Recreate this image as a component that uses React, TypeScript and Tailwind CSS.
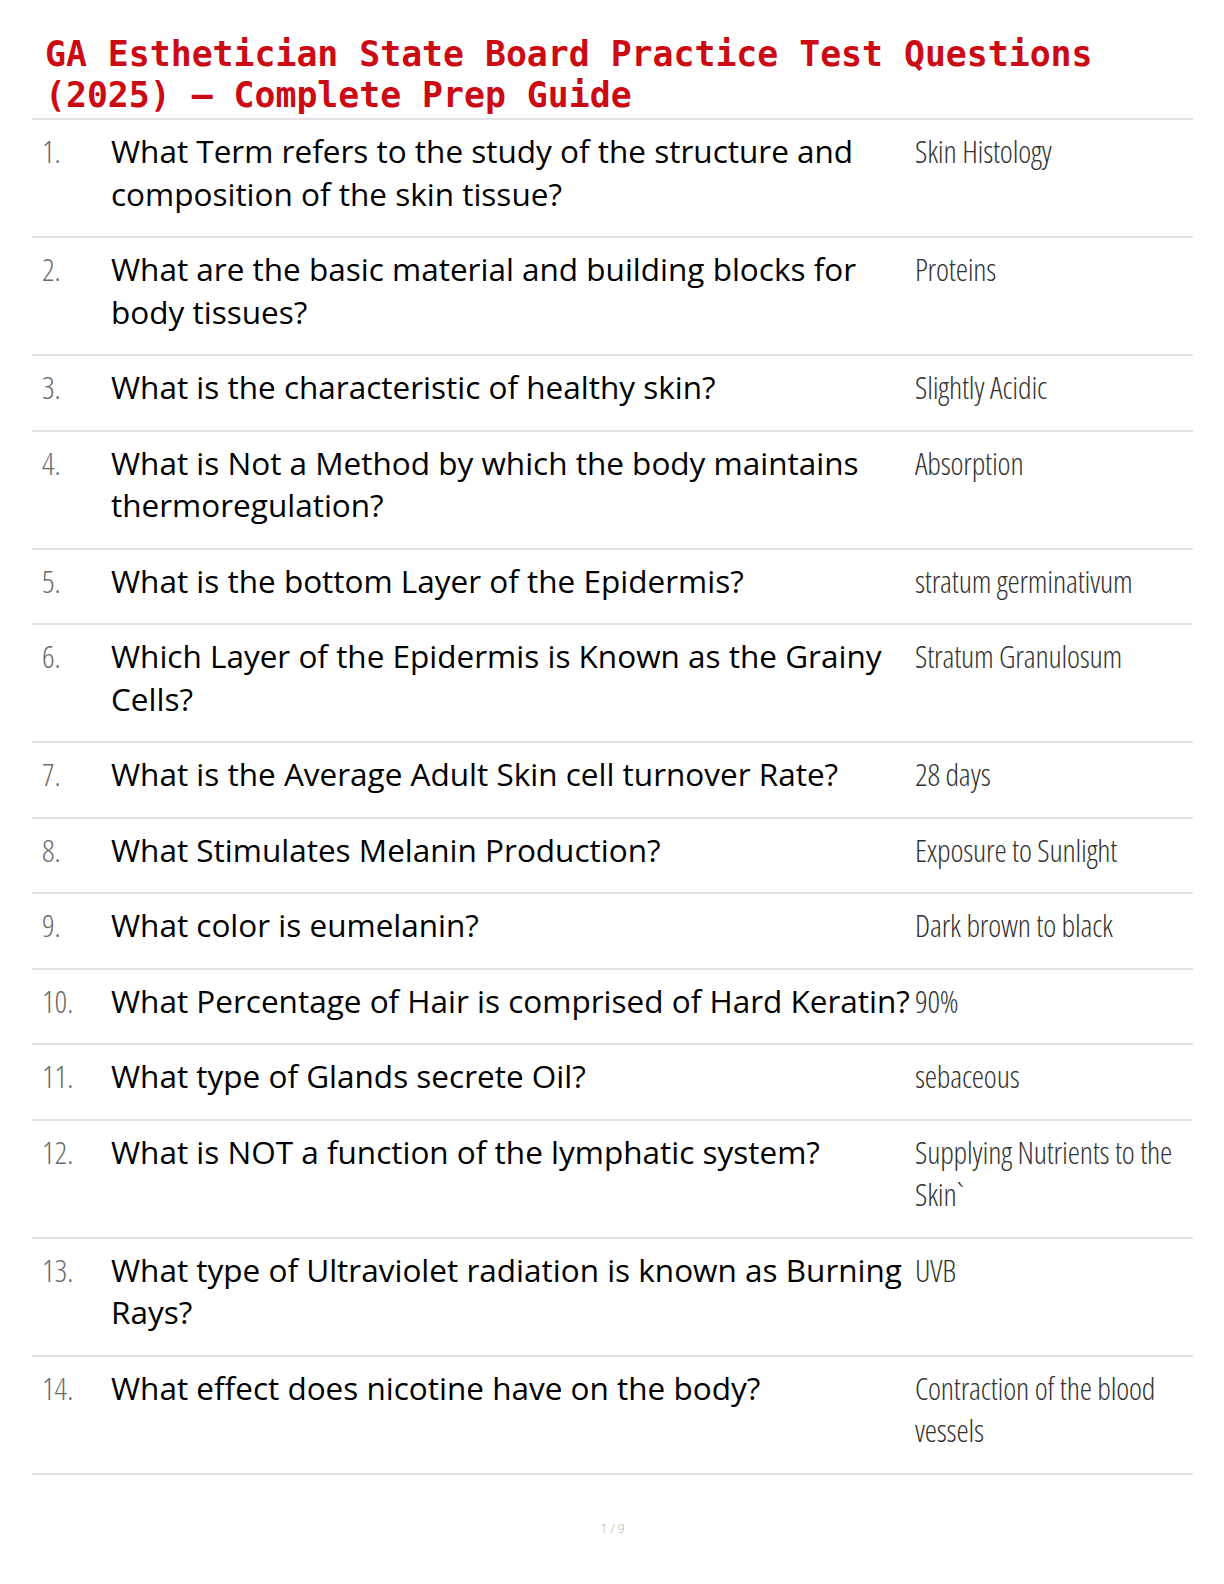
import React from "react";

const rows: { n: string; q: string[]; a: string[] }[] = [
  { n: "1.", q: ["What Term refers to the study of the structure and", "composition of the skin tissue?"], a: ["Skin Histology"] },
  { n: "2.", q: ["What are the basic material and building blocks for", "body tissues?"], a: ["Proteins"] },
  { n: "3.", q: ["What is the characteristic of healthy skin?"], a: ["Slightly Acidic"] },
  { n: "4.", q: ["What is Not a Method by which the body maintains", "thermoregulation?"], a: ["Absorption"] },
  { n: "5.", q: ["What is the bottom Layer of the Epidermis?"], a: ["stratum germinativum"] },
  { n: "6.", q: ["Which Layer of the Epidermis is Known as the Grainy", "Cells?"], a: ["Stratum Granulosum"] },
  { n: "7.", q: ["What is the Average Adult Skin cell turnover Rate?"], a: ["28 days"] },
  { n: "8.", q: ["What Stimulates Melanin Production?"], a: ["Exposure to Sunlight"] },
  { n: "9.", q: ["What color is eumelanin?"], a: ["Dark brown to black"] },
  { n: "10.", q: ["What Percentage of Hair is comprised of Hard Keratin?"], a: ["90%"] },
  { n: "11.", q: ["What type of Glands secrete Oil?"], a: ["sebaceous"] },
  { n: "12.", q: ["What is NOT a function of the lymphatic system?"], a: ["Supplying Nutrients to the", "Skin`"] },
  { n: "13.", q: ["What type of Ultraviolet radiation is known as Burning", "Rays?"], a: ["UVB"] },
  { n: "14.", q: ["What effect does nicotine have on the body?"], a: ["Contraction of the blood", "vessels"] },
];

export default function App() {
  return (
    <div className="w-[1224px] min-h-[1584px] bg-white">
      <div className="pt-[34px] pl-[32px] pr-[31px]">
        <h1 className="pl-[13px] pb-[2px] border-b-2 border-[#e2e2e8] font-['DejaVu_Sans_Mono',monospace] font-bold text-[34.8px] leading-[41px] text-[#cc0a14]">
          GA Esthetician State Board Practice Test Questions
          <br />
          (2025) – Complete Prep Guide
        </h1>
        <div>
          {rows.map((r) => (
            <div key={r.n} className="flex border-b-2 border-[#e2e2e8] pt-[10px] pb-[21px]">
              <div className="w-[79px] pl-[10px] font-['Open_Sans',sans-serif] font-light font-stretch-[75%] text-[31px] leading-[42.5px] text-[#6a6a6a]">
                {r.n}
              </div>
              <div className="w-[804px] font-['Open_Sans',sans-serif] text-[31.5px] leading-[42.5px] text-black">
                {r.q.map((l, i) => (
                  <div key={i} className="whitespace-nowrap">{l}</div>
                ))}
              </div>
              <div className="flex-1 font-['Open_Sans',sans-serif] font-light font-stretch-[75%] text-[31px] tracking-[-0.2px] leading-[42.5px] text-[#333]">
                {r.a.map((l, i) => (
                  <div key={i} className="whitespace-nowrap">{l}</div>
                ))}
              </div>
            </div>
          ))}
        </div>
        <div className="pt-[45px] text-center font-['Open_Sans',sans-serif] font-light text-[12px] text-[#aaa]">
          1 / 9
        </div>
      </div>
    </div>
  );
}
